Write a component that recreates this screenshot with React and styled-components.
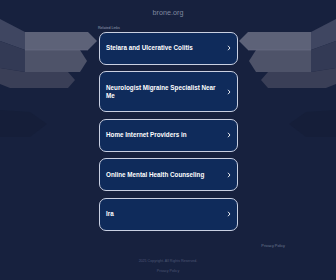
import React from "react";
import styled, { createGlobalStyle } from "styled-components";

const Global = createGlobalStyle`
  html, body { margin: 0; padding: 0; background: #17213e; }
  body { font-family: "Liberation Sans", Arial, sans-serif; }
`;

const Page = styled.div`
  position: relative;
  width: 336px;
  height: 280px;
  overflow: hidden;
  background: #17213e;
  display: flex;
  flex-direction: column;
  align-items: center;
`;

const Decor = styled.svg`
  position: absolute;
  top: 0;
  left: 0;
  width: 336px;
  height: 150px;
  z-index: 0;
  pointer-events: none;
`;

const Domain = styled.div`
  position: relative;
  z-index: 1;
  margin-top: 8px;
  font-size: 7.2px;
  line-height: 10px;
  color: #7f889e;
`;

const Main = styled.div`
  position: relative;
  z-index: 1;
  width: 139px;
  margin-top: 7.5px;
  display: flex;
  flex-direction: column;
`;

const Label = styled.div`
  font-size: 3.6px;
  line-height: 5px;
  color: #9aa2b6;
  margin-left: -0.5px;
  margin-bottom: 1px;
`;

const List = styled.div`
  display: flex;
  flex-direction: column;
  gap: 6.5px;
`;

const Card = styled.a`
  display: flex;
  align-items: center;
  justify-content: space-between;
  box-sizing: border-box;
  padding: 11.5px 6px 11.5px 6.5px;
  border: 1.5px solid #c9d0e2;
  border-radius: 7px;
  background: #0f2b5b;
  color: #ffffff;
  text-decoration: none;
`;

const CardText = styled.span`
  display: block;
  max-width: 116px;
  font-size: 6.3px;
  line-height: 8px;
  font-weight: 700;
`;

const Chevron = styled.svg`
  display: block;
  width: 4px;
  height: 6px;
  flex: none;
`;

const RightNote = styled.div`
  position: relative;
  z-index: 1;
  align-self: flex-end;
  margin-top: 13px;
  margin-right: 51px;
  font-size: 3.8px;
  line-height: 5px;
  color: #6f7993;
`;

const FooterLine = styled.div`
  position: relative;
  z-index: 1;
  margin-top: ${(p) => p.$gap}px;
  font-size: 3.6px;
  line-height: 5px;
  color: #4d5675;
`;

const items = [
  "Stelara and Ulcerative Colitis",
  "Neurologist Migraine Specialist Near Me",
  "Home Internet Providers in",
  "Online Mental Health Counseling",
  "Ira",
];

function Shapes() {
  return (
    <g>
      <polygon points="0,110 30,112 47,124 30,137 0,137" fill="#151e39" />
      <polygon points="0,19 25,32 25,50 0,41" fill="#3f4661" />
      <polygon points="0,41 25,50 25,72 0,68" fill="#333a55" />
      <polygon points="0,68 25,72 68,72 75,80 68,88 10,88 0,84" fill="#3a3f57" />
      <polygon points="25,32 88,32 97,41 88,50 25,50" fill="#5d6278" />
      <polygon points="25,50 80,50 87,61 80,72 25,72" fill="#4e5369" />
      <line x1="25" y1="50" x2="88" y2="50" stroke="#6b7086" strokeWidth="0.6" />
    </g>
  );
}

export default function App() {
  return (
    <>
      <Global />
      <Page>
        <Decor viewBox="0 0 336 150">
          <Shapes />
          <g transform="translate(336,0) scale(-1,1)">
            <Shapes />
          </g>
        </Decor>
        <Domain>brone.org</Domain>
        <Main>
          <Label>Related Links</Label>
          <List>
            {items.map((t) => (
              <Card key={t} href="#">
                <CardText>{t}</CardText>
                <Chevron viewBox="0 0 4 6">
                  <polyline
                    points="1,0.8 3,3 1,5.2"
                    fill="none"
                    stroke="#ffffff"
                    strokeWidth="0.9"
                  />
                </Chevron>
              </Card>
            ))}
          </List>
        </Main>
        <RightNote>Privacy Policy</RightNote>
        <FooterLine $gap={10}>2025 Copyright. All Rights Reserved.</FooterLine>
        <FooterLine $gap={5}>Privacy Policy</FooterLine>
      </Page>
    </>
  );
}
